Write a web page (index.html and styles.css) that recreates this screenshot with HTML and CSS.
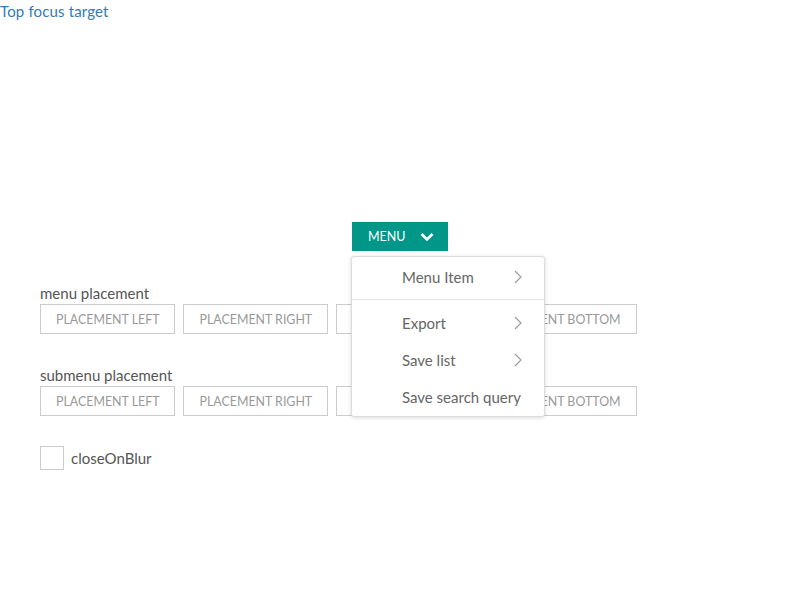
FILE: index.html
```html
<!DOCTYPE html>
<html>
<head>
<meta charset="utf-8">
<link rel="stylesheet" href="styles.css">
</head>
<body>
<a class="top-link" href="#">Top focus target</a>
<div class="stage">
  <div class="anchor">
    <button class="menu-btn">MENU
      <svg class="caret" width="14" height="10" viewBox="0 0 14 10"><path d="M1.5 2 L7 7.5 L12.5 2" fill="none" stroke="#fff" stroke-width="2.6"/></svg>
    </button>
    <div class="menu">
      <div class="item"><span>Menu Item</span><svg class="chev" width="8" height="14" viewBox="0 0 8 14"><path d="M1 1 L7 7 L1 13" fill="none" stroke="#999" stroke-width="1.1"/></svg></div>
      <div class="divider"></div>
      <div class="item"><span>Export</span><svg class="chev" width="8" height="14" viewBox="0 0 8 14"><path d="M1 1 L7 7 L1 13" fill="none" stroke="#999" stroke-width="1.1"/></svg></div>
      <div class="item"><span>Save list</span><svg class="chev" width="8" height="14" viewBox="0 0 8 14"><path d="M1 1 L7 7 L1 13" fill="none" stroke="#999" stroke-width="1.1"/></svg></div>
      <div class="item"><span>Save search query</span></div>
    </div>
  </div>
</div>
<div class="controls">
  <div class="group">
    <div class="label">menu placement</div>
    <div class="row">
      <button class="opt">PLACEMENT LEFT</button>
      <button class="opt">PLACEMENT RIGHT</button>
      <button class="opt">PLACEMENT TOP</button>
      <button class="opt">PLACEMENT BOTTOM</button>
    </div>
  </div>
  <div class="group">
    <div class="label">submenu placement</div>
    <div class="row">
      <button class="opt">PLACEMENT LEFT</button>
      <button class="opt">PLACEMENT RIGHT</button>
      <button class="opt">PLACEMENT TOP</button>
      <button class="opt">PLACEMENT BOTTOM</button>
    </div>
  </div>
  <label class="check"><span class="box"></span>closeOnBlur</label>
</div>
</body>
</html>
```
FILE: styles.css
```css
html, body {
  margin: 0;
  padding: 0;
  background: #fff;
  font-family: Lato, "Open Sans", sans-serif;
  color: #555;
}
.top-link {
  display: block;
  color: #337ab7;
  text-decoration: none;
  font-size: 15px;
  line-height: 23px;
  width: max-content;
  letter-spacing: 0.15px;
}
.stage {
  display: flex;
  justify-content: center;
  padding-top: 199px;
}
.anchor {
  position: relative;
}
.menu-btn {
  display: flex;
  align-items: center;
  gap: 14px;
  height: 29px;
  width: 96px;
  padding: 0 0 0 16px;
  margin: 0;
  border: none;
  background: #009688;
  color: #fff;
  font-family: Lato, sans-serif;
  font-size: 12.5px;
}
.caret {
  display: block;
}
.menu {
  position: absolute;
  top: 34px;
  left: -1px;
  width: 192px;
  padding: 1px 0 1px;
  background: #fff;
  border: 1px solid #ddd;
  border-radius: 3px;
  box-shadow: 0 1px 4px rgba(0,0,0,0.15);
  z-index: 10;
}
.item {
  display: flex;
  align-items: center;
  justify-content: space-between;
  height: 37px;
  padding: 0 22px 0 50px;
  font-size: 15px;
  color: #666;
}
.chev {
  display: block;
}
.divider {
  height: 1px;
  background: #e2e2e2;
  margin: 4px 0;
}
.controls {
  padding: 31px 0 0 40px;
}
.group {
  margin-bottom: 30px;
}
.label {
  font-size: 15px;
  color: #555;
  line-height: 22px;
}
.row {
  display: flex;
  gap: 8px;
}
.opt {
  height: 30px;
  padding: 0 15px;
  margin: 0;
  background: #fff;
  border: 1px solid #ccc;
  color: #999;
  font-family: Lato, sans-serif;
  font-size: 12.4px;
}
.check {
  display: flex;
  align-items: center;
  gap: 7px;
  font-size: 15px;
  color: #555;
}
.box {
  width: 22px;
  height: 22px;
  border: 1px solid #ccc;
  background: #fff;
}
```
